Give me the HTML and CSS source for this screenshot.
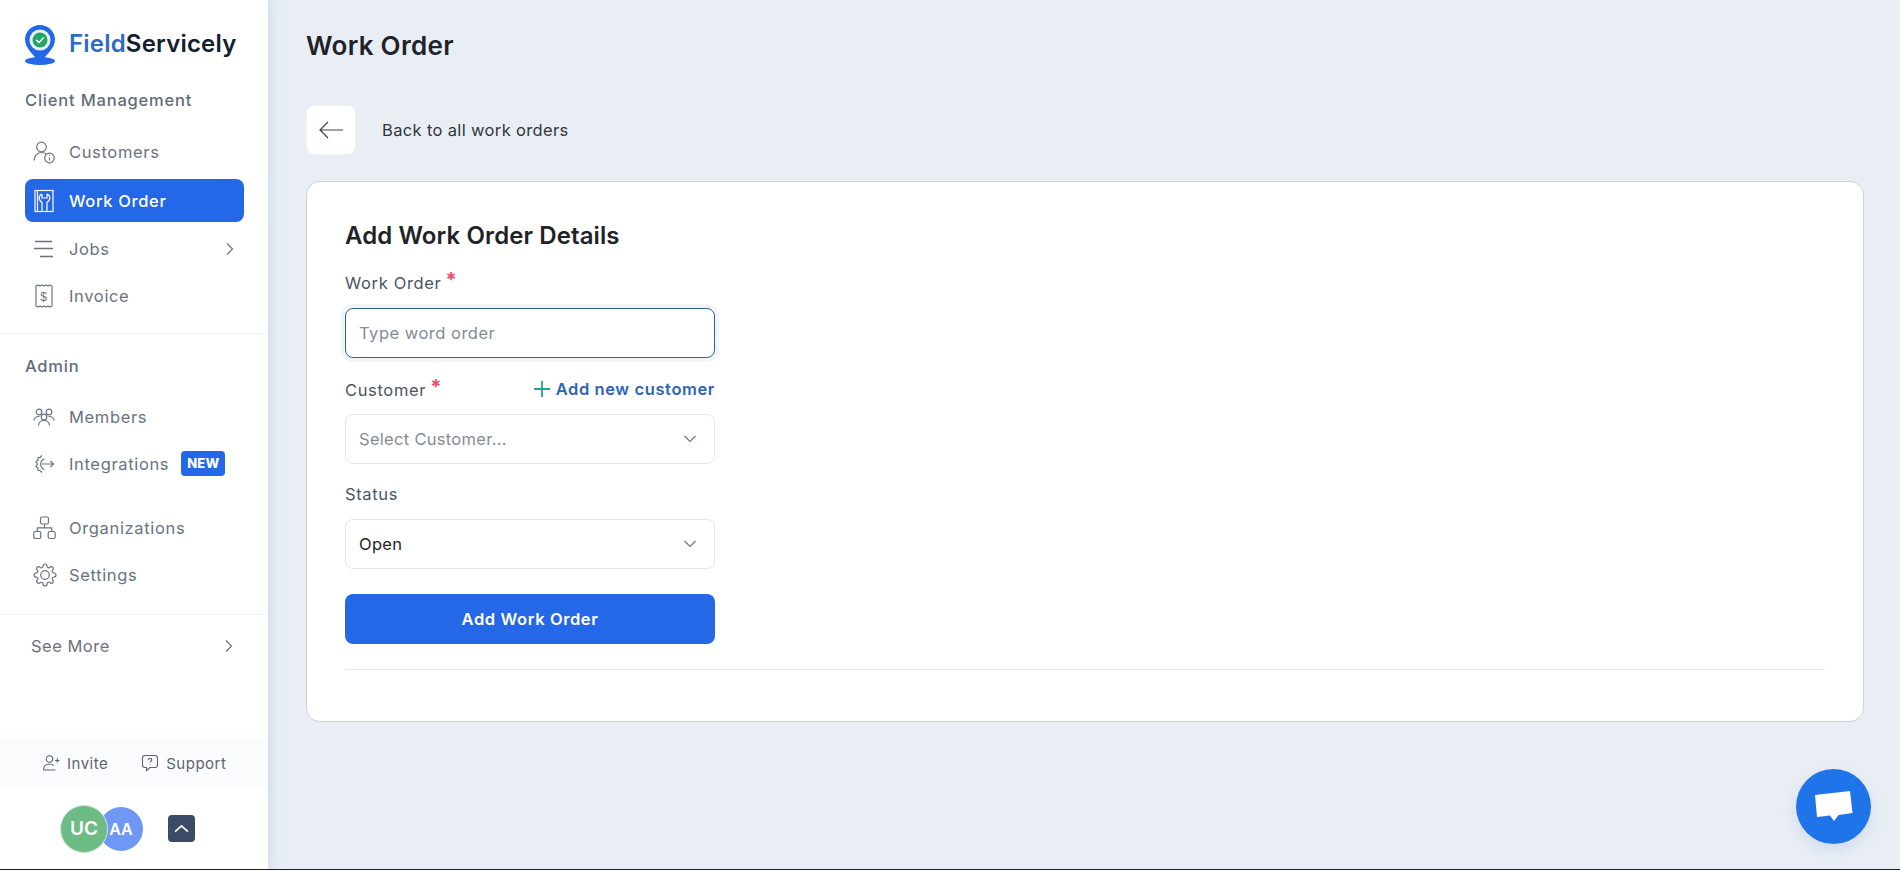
FILE: index.html
```html
<!DOCTYPE html>
<html lang="en">
<head>
    <meta charset="UTF-8" />
    <meta name="viewport" content="width=device-width, initial-scale=1.0" />
    <title>Work Order</title>
    <link rel="stylesheet" href="styles.css">
</head>
<body>
    <div class="app">
        <aside class="sidebar">
            <div class="brand">
                <svg class="brand-pin" width="32" height="42" viewBox="0 0 32 42">
                    <ellipse cx="16" cy="37" rx="15" ry="4" fill="#2468e8"/>
                    <path d="M16 1C7.7 1 1 7.6 1 15.6c0 9 9.2 15.800 15 23.400 5.800-7.600 15-14.400 15-23.400C31 7.600 24.300 1 16 1z" fill="#2468e8"/>
                    <circle cx="16" cy="16" r="10.500" fill="#e4f3ef"/>
                    <circle cx="16" cy="16" r="7.500" fill="#22a565"/>
                    <path d="M12.500 16.200l2.500 2.400 4.500-4.800" fill="none" stroke="#fff" stroke-width="1.500" stroke-linecap="round" stroke-linejoin="round"/>
                </svg>
                <span class="brand-name"><span class="brand-field">Field</span>Servicely</span>
            </div>

            <section class="nav-section">
                <h4 class="nav-title">Client Management</h4>
                <div class="nav-list">
                    <a class="nav-item">
                        <svg class="nav-icon" viewBox="0 0 24 24"><circle cx="8.500" cy="7" r="4.800"/><path d="M1 20.500c.3-4.800 3.500-8 7.500-8 1.800 0 3.500.5 4.800 1.500"/><circle cx="16.500" cy="18" r="4.800"/><path d="M16.500 17.500v3M16.500 15.300v.6"/></svg>
                        Customers
                    </a>
                    <a class="nav-item active">
                        <svg class="nav-icon" viewBox="0 0 24 24"><rect x="2" y="1.500" width="18" height="21"/><path d="M4.500 1.500v21M9 5C7.200 5.800 6.200 7.200 6.200 9c0 2 1.200 3.500 2.800 4.200v9.300M14 5c1.800.8 2.800 2.200 2.800 4 0 2-1.200 3.500-2.800 4.200v9.300M9 5v4h5V5"/></svg>
                        Work Order
                    </a>
                    <a class="nav-item">
                        <svg class="nav-icon" viewBox="0 0 24 24"><path d="M2 4.500h17M1 11.500h19M7 19.500h13" stroke-width="1.600"/></svg>
                        Jobs
                        <svg class="nav-chevron" viewBox="0 0 12 12"><path d="M3 .5L8.500 6 3 11.500"/></svg>
                    </a>
                    <a class="nav-item">
                        <svg class="nav-icon" viewBox="0 0 24 24"><path d="M3 2l2-1 2 1 2-1 2 1 2-1 2 1 2-1 2 1v20l-2 1-2-1-2 1-2-1-2 1-2-1-2 1-2-1z"/><text x="11" y="16.500" class="icon-dollar">$</text></svg>
                        Invoice
                    </a>
                </div>
            </section>

            <section class="nav-section nav-section-admin">
                <h4 class="nav-title">Admin</h4>
                <div class="nav-list nav-list-tight">
                    <a class="nav-item">
                        <svg class="nav-icon" viewBox="0 0 24 24"><circle cx="6" cy="7" r="2.800"/><circle cx="16" cy="7" r="2.800"/><circle cx="11" cy="12" r="2.800"/><path d="M1 15.500c.3-2.500 2-4 4.500-4h1M21 15.500c-.3-2.500-2-4-4.500-4h-1M5.500 20.500c.3-3 2.500-5 5.500-5s5.200 2 5.500 5"/></svg>
                        Members
                    </a>
                    <a class="nav-item">
                        <svg class="nav-icon" viewBox="0 0 24 24"><path d="M9 3.500L7 5.500H5V8L3 10l1.500 2L3 14.500 5 16v2.500h2l2 2M11.500 7a5.500 5.500 0 0 0 0 10.500M9 12h11.500M17.500 9l3 3-3 3"/></svg>
                        Integrations
                        <span class="badge-new">NEW</span>
                    </a>
                    <a class="nav-item nav-item-gap">
                        <svg class="nav-icon" viewBox="0 0 24 24"><rect x="7.500" y="1" width="8" height="7" rx="1.500"/><rect x=".8" y="15.500" width="7" height="7" rx="1.500"/><rect x="15.200" y="15.500" width="7" height="7" rx="1.500"/><path d="M11.500 8v3.800M4.300 15.500v-3.700h14.400v3.700"/></svg>
                        Organizations
                    </a>
                    <a class="nav-item">
                        <svg class="nav-icon" viewBox="0 0 24 24"><circle cx="12" cy="12" r="4.300"/><path d="M19.400 15a1.650 1.650 0 0 0 .33 1.820l.06.06a2 2 0 0 1 0 2.830 2 2 0 0 1-2.830 0l-.06-.06a1.650 1.650 0 0 0-1.820-.33 1.650 1.650 0 0 0-1 1.510V21a2 2 0 0 1-2 2 2 2 0 0 1-2-2v-.09A1.650 1.650 0 0 0 9 19.400a1.650 1.650 0 0 0-1.820.33l-.06.06a2 2 0 0 1-2.830 0 2 2 0 0 1 0-2.830l.06-.06a1.650 1.650 0 0 0 .33-1.820 1.650 1.650 0 0 0-1.510-1H3a2 2 0 0 1-2-2 2 2 0 0 1 2-2h.09A1.650 1.650 0 0 0 4.600 9a1.650 1.650 0 0 0-.33-1.820l-.06-.06a2 2 0 0 1 0-2.830 2 2 0 0 1 2.830 0l.06.06a1.650 1.650 0 0 0 1.820.33H9a1.650 1.650 0 0 0 1-1.510V3a2 2 0 0 1 2-2 2 2 0 0 1 2 2v.09a1.650 1.650 0 0 0 1 1.510 1.650 1.650 0 0 0 1.820-.33l.06-.06a2 2 0 0 1 2.830 0 2 2 0 0 1 0 2.830l-.06.06a1.650 1.650 0 0 0-.33 1.820V9a1.650 1.650 0 0 0 1.510 1H21a2 2 0 0 1 2 2 2 2 0 0 1-2 2h-.09a1.650 1.650 0 0 0-1.510 1z"/></svg>
                        Settings
                    </a>
                </div>
            </section>

            <a class="see-more">
                See More
                <svg class="nav-chevron" viewBox="0 0 12 12"><path d="M3 .5L8.500 6 3 11.500"/></svg>
            </a>

            <div class="sidebar-footer">
                <div class="footer-links">
                    <a class="footer-link">
                        <svg viewBox="0 0 18 18"><circle cx="7.500" cy="5" r="3.200"/><path d="M1.500 16c0-3.800 2.500-6 6-6 1.800 0 3.300.6 4.300 1.600M1.500 16h12M13 6.500h4.500M15.250 4.300v4.400"/></svg>
                        Invite
                    </a>
                    <a class="footer-link">
                        <svg viewBox="0 0 18 18"><path d="M4 1.500h10c1.400 0 2.500 1.100 2.500 2.500v7c0 1.400-1.100 2.500-2.500 2.500H9l-3.500 3v-3H4c-1.400 0-2.500-1.100-2.500-2.500V4c0-1.400 1.100-2.500 2.500-2.500z"/><path d="M7.300 5.800c.2-.9.900-1.400 1.800-1.400 1 0 1.700.6 1.700 1.500 0 1.300-1.700 1.400-1.700 2.700M9.100 10.200v.5"/></svg>
                        Support
                    </a>
                </div>
                <div class="footer-user">
                    <div class="avatars">
                        <span class="avatar avatar-uc">UC</span>
                        <span class="avatar avatar-aa">AA</span>
                    </div>
                    <button class="user-toggle">
                        <svg viewBox="0 0 14 14"><path d="M1 10L7 4.500 13 10"/></svg>
                    </button>
                </div>
            </div>
        </aside>

        <main class="content">
            <h1 class="page-title">Work Order</h1>

            <div class="back-row">
                <button class="back-btn">
                    <svg viewBox="0 0 24 24"><path d="M24 12H1M9 4l-8 8 8 8"/></svg>
                </button>
                <span class="back-text">Back to all work orders</span>
            </div>

            <div class="card">
                <h2 class="card-title">Add Work Order Details</h2>
                <form class="form">
                    <div class="field field-order">
                        <div class="field-head">
                            <label class="field-label" for="workOrder">Work Order<span class="req">*</span></label>
                        </div>
                        <input class="text-input" id="workOrder" type="text" placeholder="Type word order" />
                    </div>
                    <div class="field field-customer">
                        <div class="field-head">
                            <label class="field-label">Customer<span class="req">*</span></label>
                            <a class="add-link">
                                <svg viewBox="0 0 18 18"><path d="M9 1v16M1 9h16"/></svg>
                                Add new customer
                            </a>
                        </div>
                        <div class="select-box">
                            <span class="select-placeholder">Select Customer...</span>
                            <svg class="select-chevron" viewBox="0 0 12 8"><path d="M.5 1l5.500 5.500L11.500 1"/></svg>
                        </div>
                    </div>
                    <div class="field">
                        <div class="field-head">
                            <label class="field-label">Status</label>
                        </div>
                        <div class="select-box">
                            <span class="select-value">Open</span>
                            <svg class="select-chevron" viewBox="0 0 12 8"><path d="M.5 1l5.500 5.500L11.500 1"/></svg>
                        </div>
                    </div>
                    <button type="button" class="submit-btn">Add Work Order</button>
                </form>
                <hr class="card-divider" />
            </div>
        </main>

        <button class="chat-btn">
            <svg width="38" height="31" viewBox="0 0 38 31"><path d="M0 4L35 0l2.500 22-14 2-4.500 6-4-5.500-13 1.500z" fill="#fff"/></svg>
        </button>
    </div>
</body>
</html>
```

FILE: styles.css
```css
* {
    box-sizing: border-box;
}
html, body {
    margin: 0;
    height: 100%;
    background: #161b26;
}
body {
    font-family: Inter, "Open Sans", sans-serif;
    color: #1f2328;
}
.app {
    position: relative;
    display: flex;
    height: 869px;
    background: #e9eef5;
    overflow: hidden;
}

/* sidebar */
.sidebar {
    width: 268px;
    flex-shrink: 0;
    display: flex;
    flex-direction: column;
    background: #ffffff;
    box-shadow: 2px 0 10px rgba(120, 145, 185, 0.25);
}
.brand {
    display: flex;
    align-items: center;
    gap: 13px;
    padding: 24px 0 0 24px;
    height: 66px;
}
.brand-name {
    margin-bottom: 4px;
    font-size: 24px;
    font-weight: 600;
    letter-spacing: 0.2px;
    color: #12202f;
    white-space: nowrap;
}
.brand-field {
    color: #2e6bc6;
}
.nav-section {
    padding: 0 25px;
}
.nav-title {
    margin: 24px 0 20px;
    font-size: 16.5px;
    line-height: 20px;
    font-weight: 500;
    letter-spacing: 0.8px;
    color: #636b78;
}
.nav-list {
    display: flex;
    flex-direction: column;
    gap: 4px;
    padding-bottom: 16px;
}
.nav-list-tight {
    padding-bottom: 18px;
}
.nav-item {
    display: flex;
    align-items: center;
    height: 43px;
    width: 219px;
    padding-left: 8px;
    border-radius: 8px;
    font-size: 16.5px;
    letter-spacing: 0.65px;
    color: #6b7280;
}
.nav-item.active {
    margin: 2px 0 1px;
    background: #2468e8;
    color: #ffffff;
    font-weight: 500;
}
.nav-item-gap {
    margin-top: 17px;
}
.nav-icon {
    width: 24px;
    height: 24px;
    margin-right: 12px;
    flex-shrink: 0;
    fill: none;
    stroke: currentColor;
    stroke-width: 1.2;
}
.icon-dollar {
    font-size: 12px;
    text-anchor: middle;
    fill: currentColor;
    stroke: none;
    font-family: "Liberation Sans", sans-serif;
}
.nav-chevron {
    width: 12px;
    height: 12px;
    margin-left: auto;
    margin-right: 8px;
    fill: none;
    stroke: #6b7280;
    stroke-width: 1.2;
}
.badge-new {
    margin-left: 12px;
    padding: 0 6px;
    height: 25px;
    line-height: 25px;
    border-radius: 4px;
    background: #2468e8;
    color: #ffffff;
    font-size: 13px;
    font-weight: 800;
    letter-spacing: 0.2px;
}
.nav-section-admin {
    border-top: 1px solid #f0f2f5;
    border-bottom: 1px solid #f0f2f5;
}
.nav-section-admin .nav-title {
    margin: 22px 0 19px;
}
.see-more {
    display: flex;
    align-items: center;
    height: 43px;
    margin-top: 9px;
    padding: 0 0 0 31px;
    font-size: 16.5px;
    letter-spacing: 0.5px;
    color: #6b7280;
}
.see-more .nav-chevron {
    margin-right: 33px;
}
.sidebar-footer {
    margin-top: auto;
}
.footer-links {
    display: flex;
    gap: 33px;
    align-items: center;
    height: 46px;
    padding: 0 0 4px 42px;
    background: #fbfcfd;
    box-shadow: 0 -2px 6px rgba(120, 145, 185, 0.07);
}
.footer-link {
    display: flex;
    align-items: center;
    gap: 7px;
    font-size: 15px;
    letter-spacing: 0.5px;
    color: #5b6472;
}
.footer-link svg {
    width: 18px;
    height: 18px;
    fill: none;
    stroke: #5b6472;
    stroke-width: 1.1;
}
.footer-user {
    display: flex;
    align-items: center;
    height: 81px;
    padding-left: 60px;
    background: #ffffff;
}
.avatars {
    display: flex;
    align-items: center;
}
.avatar {
    display: flex;
    align-items: center;
    justify-content: center;
    border-radius: 50%;
    color: #ffffff;
    font-weight: 600;
}
.avatar-uc {
    position: relative;
    z-index: 1;
    width: 48px;
    height: 48px;
    background: #6dbb85;
    border: 1px solid #c9ead3;
    font-size: 19px;
}
.avatar-aa {
    width: 44px;
    height: 44px;
    margin-left: -9px;
    background: #6f97f5;
    font-size: 16px;
}
.user-toggle {
    display: flex;
    align-items: center;
    justify-content: center;
    width: 27px;
    height: 27px;
    margin-left: 25px;
    padding: 0;
    border: 0;
    border-radius: 4px;
    background: #3d4a66;
}
.user-toggle svg {
    width: 15px;
    height: 15px;
    fill: none;
    stroke: #ffffff;
    stroke-width: 1.6;
}

/* main */
.content {
    flex: 1;
    padding: 30px 36px 0 38px;
}
.page-title {
    margin: 0;
    font-size: 26px;
    line-height: 32px;
    font-weight: 600;
    letter-spacing: 0.3px;
    color: #1f2328;
}
.back-row {
    display: flex;
    align-items: center;
    gap: 26px;
    margin-top: 43px;
}
.back-btn {
    display: flex;
    align-items: center;
    justify-content: center;
    width: 50px;
    height: 50px;
    padding: 0;
    border: 1px solid #f0f2f6;
    border-radius: 8px;
    background: #ffffff;
}
.back-btn svg {
    width: 24px;
    height: 24px;
    fill: none;
    stroke: #3f4650;
    stroke-width: 1.2;
}
.back-text {
    font-size: 16.5px;
    letter-spacing: 0.35px;
    color: #31363e;
}
.card {
    height: 541px;
    margin-top: 26px;
    padding: 38px 38px 0;
    background: #ffffff;
    border: 1px solid #cbd2dc;
    border-radius: 14px;
}
.card-title {
    margin: 0;
    font-size: 24px;
    line-height: 32px;
    font-weight: 600;
    letter-spacing: 0.1px;
    color: #1f2328;
}
.form {
    width: 370px;
    margin-top: 18px;
}
.field {
    margin-bottom: 20px;
}
.field-order {
    margin-bottom: 19px;
}
.field-order .field-head {
    margin-bottom: 14px;
}
.field-customer {
    margin-bottom: 18px;
}
.field-head {
    display: flex;
    align-items: center;
    justify-content: space-between;
    height: 24px;
    margin-bottom: 13px;
}
.field-label {
    font-size: 16.5px;
    letter-spacing: 0.65px;
    color: #4b5563;
}
.req {
    position: relative;
    top: -2px;
    margin-left: 4px;
    color: #e8506e;
    font-size: 20px;
    line-height: 1;
    font-weight: 700;
}
.add-link {
    display: flex;
    align-items: center;
    gap: 5px;
    font-size: 16.5px;
    font-weight: 600;
    letter-spacing: 0.6px;
    color: #2f65b5;
}
.add-link svg {
    width: 18px;
    height: 18px;
    fill: none;
    stroke: #2a9d9d;
    stroke-width: 1.8;
}
.text-input {
    display: block;
    width: 100%;
    height: 50px;
    padding: 0 13px;
    border: 1px solid #2f6690;
    border-radius: 8px;
    box-shadow: 0 0 0 4px #f1f5f9;
    background: #ffffff;
    font-family: inherit;
    font-size: 16.5px;
    letter-spacing: 0.5px;
    outline: none;
}
.text-input::placeholder {
    color: #858b94;
}
.select-box {
    display: flex;
    align-items: center;
    justify-content: space-between;
    height: 50px;
    padding: 0 18px 0 13px;
    border: 1px solid #e5e7eb;
    border-radius: 8px;
    background: #ffffff;
    font-size: 16.5px;
    letter-spacing: 0.3px;
}
.select-placeholder {
    color: #858b94;
}
.select-value {
    color: #1f2328;
}
.select-chevron {
    width: 12px;
    height: 8px;
    fill: none;
    stroke: #6b7280;
    stroke-width: 1.2;
}
.submit-btn {
    display: block;
    width: 100%;
    height: 50px;
    margin-top: 25px;
    border: 0;
    border-radius: 8px;
    background: #2468e8;
    color: #ffffff;
    font-family: inherit;
    font-size: 16.5px;
    font-weight: 600;
    letter-spacing: 0.6px;
}
.card-divider {
    margin: 25px 0 0;
    border: 0;
    border-top: 1px solid #e5e7eb;
}
.chat-btn {
    position: absolute;
    right: 29px;
    bottom: 25px;
    display: flex;
    align-items: center;
    justify-content: center;
    width: 75px;
    height: 75px;
    padding: 0;
    border: 0;
    border-radius: 50%;
    background: #1f74ea;
    box-shadow: 0 6px 14px rgba(120, 145, 185, 0.2);
}
```
